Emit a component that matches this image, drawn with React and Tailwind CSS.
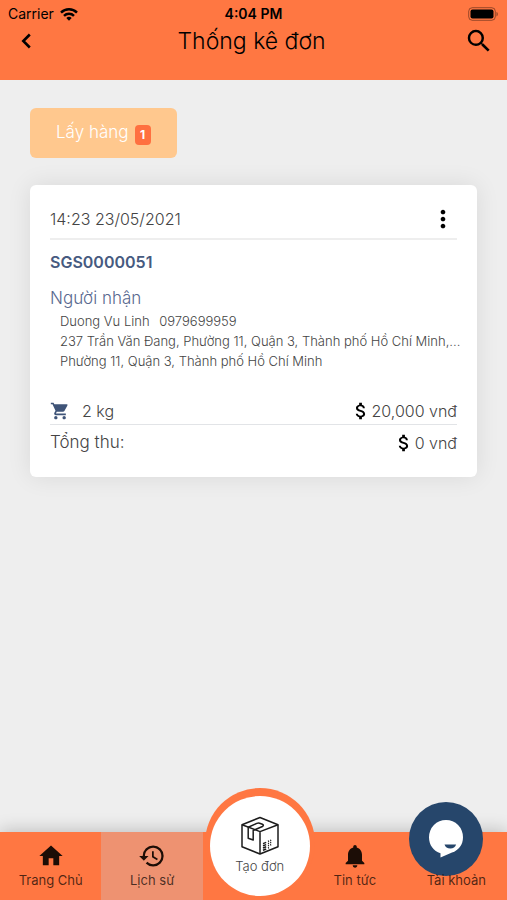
import React from "react";
import {
  MdSearch,
  MdMoreVert,
  MdShoppingCart,
  MdAttachMoney,
  MdHome,
  MdHistory,
  MdNotifications,
} from "react-icons/md";

const order = {
  time: "14:23 23/05/2021",
  code: "SGS0000051",
  name: "Duong Vu Linh",
  phone: "0979699959",
  address: "237 Trần Văn Đang, Phường 11, Quận 3, Thành phố Hồ Chí Minh,...",
  area: "Phường 11, Quận 3, Thành phố Hồ Chí Minh",
  weight: "2 kg",
  fee: "20,000 vnđ",
  total: "0 vnđ",
};

function WifiIcon() {
  return (
    <svg viewBox="0 0 18 13" className="w-[18px] h-[13px]" fill="none" stroke="currentColor" strokeWidth="2.5" aria-hidden="true">
      <path d="M1 4.6a11.4 11.4 0 0 1 16 0" />
      <path d="M4 7.8a7.2 7.2 0 0 1 10 0" />
      <path d="M9 12.8 6.3 10a3.9 3.9 0 0 1 5.4 0z" fill="currentColor" stroke="none" />
    </svg>
  );
}

function BatteryIcon() {
  return (
    <svg viewBox="0 0 31 14" className="w-[31px] h-[14px]" aria-hidden="true">
      <rect x="0.7" y="0.7" width="26.6" height="12.6" rx="3.6" fill="none" stroke="#000" strokeOpacity="0.4" />
      <rect x="2.5" y="2.5" width="23" height="9" rx="2" fill="#000" />
      <path d="M28.5 5v4.4c1.7-.6 1.7-3.8 0-4.4z" fill="#000" fillOpacity="0.45" />
    </svg>
  );
}

function BoxIcon() {
  return (
    <svg viewBox="0 0 40 40" className="w-10 h-10" fill="none" stroke="#1c1c1c" strokeWidth="1.5" strokeLinejoin="round" aria-hidden="true">
      <path d="M20 1.500 38 8.700v22L20 38 2 30.700v-22z" />
      <path d="M2 8.700 20 15.600 38 8.700M20 15.600V38" />
      <path d="M8.200 11.200v11l5 1.800V14.500l9.200-4c1.400-.8 1.200-1.800 0-2.300l-2.800-1c-1-.3-1.800-.2-2.800.2z" />
      <path d="M23 27.600l3.200-1.200M23 29.800l3.200-1.200M23 32l3.200-1.200M23 34.200l3.200-1.200" />
      <path d="M28 25.400l1-.4M30.200 24.600l1-.4M28 27.600l1-.4M30.200 26.800l1-.4M28 29.800l1-.4M30.200 29l1-.4M28 32l1-.4" />
    </svg>
  );
}

function ChatIcon() {
  return (
    <svg viewBox="0 0 36 40" className="w-9 h-10" aria-hidden="true">
      <path d="M18 1a17 17 0 0 1 17 17.200c0 8-4.600 13-11 15.400L12.500 38.500v-4.300C5.500 32 1 26 1 18.200A17 17 0 0 1 18 1z" fill="#fff" />
      <path d="M16.500 25.500h11.600c-.8 2.700-2.800 4-5.800 4s-5-1.300-5.800-4z" fill="#26466b" />
    </svg>
  );
}

function NavItem({ icon, label, active }) {
  return (
    <a
      href="#"
      className={`flex flex-col items-center pt-2.5 text-[13px] leading-5 text-black/70 ${
        active ? "bg-[#ee9271]" : ""
      }`}
    >
      <span className="flex h-7 items-center text-[#1c0d06]">{icon}</span>
      <span className="relative z-10">{label}</span>
    </a>
  );
}

export default function App() {
  return (
    <div className="flex min-h-screen flex-col bg-[#eeeeee] font-['Inter','Noto_Sans',sans-serif] text-[#444]">
      {/* Header */}
      <header className="h-20 bg-[#ff7742] text-black">
        <div className="grid grid-cols-3 items-center px-2 pt-1 text-[14px] leading-5">
          <div className="flex items-center gap-1.5">
            Carrier <WifiIcon />
          </div>
          <div className="text-center font-semibold">4:04 PM</div>
          <div className="flex justify-end">
            <BatteryIcon />
          </div>
        </div>
        <div className="flex h-[34px] items-center justify-between px-3">
          <button className="flex w-7 justify-center" aria-label="Back">
            <svg viewBox="0 0 10 16" className="h-4 w-2.5" fill="none" stroke="currentColor" strokeWidth="2.6" aria-hidden="true">
              <path d="M8.800 1.500 2.300 8l6.500 6.500" />
            </svg>
          </button>
          <h1 className="text-[23px] font-light leading-8">Thống kê đơn</h1>
          <button className="flex w-8 justify-center" aria-label="Search">
            <MdSearch size={30} />
          </button>
        </div>
      </header>

      <main className="flex-1 px-[30px] pt-7">
        {/* Status tab */}
        <button className="flex h-[50px] items-center gap-1.5 rounded-md bg-[#ffc88e] px-[26px] text-[17px] font-light text-white">
          Lấy hàng
          <span className="mt-1 w-4 rounded bg-[#ff7040] text-center text-[12px] font-bold leading-5">1</span>
        </button>

        {/* Order card */}
        <section className="mt-[27px] rounded-md bg-white px-5 pb-4 pt-5 shadow-[0_0_24px_rgba(0,0,0,0.09)]">
          <div className="flex h-[35px] items-start justify-between border-b-2 border-[#eeeeee]">
            <time className="text-base font-light leading-7">{order.time}</time>
            <button className="flex h-7 items-center text-black" aria-label="More">
              <MdMoreVert size={28} />
            </button>
          </div>
          <h2 className="mt-2.5 text-base font-semibold leading-6 text-[#465a80]">{order.code}</h2>
          <h3 className="mt-3 text-[17px] font-light leading-6 text-[#59698f]">Người nhận</h3>
          <div className="mt-px pl-2.5 text-[13px] font-light leading-5">
            <p>
              {order.name} <span className="ml-1.5">{order.phone}</span>
            </p>
            <p className="whitespace-nowrap">{order.address}</p>
            <p>{order.area}</p>
          </div>
          <div className="mt-[26px] flex h-7 items-center justify-between border-b border-[#e2e4e7] text-base font-light">
            <span className="flex items-center gap-3">
              <MdShoppingCart size={20} className="text-[#3f5478]" />
              {order.weight}
            </span>
            <span className="flex items-center">
              <MdAttachMoney size={22} className="text-black" />
              {order.fee}
            </span>
          </div>
          <div className="flex h-9 items-center justify-between text-base font-light">
            <span className="text-[17px]">Tổng thu:</span>
            <span className="flex items-center">
              <MdAttachMoney size={22} className="text-black" />
              {order.total}
            </span>
          </div>
        </section>
      </main>

      {/* Bottom navigation */}
      <nav className="sticky bottom-0 grid h-[68px] grid-cols-5 bg-[#ff7742] shadow-[0_-2px_16px_rgba(0,0,0,0.2)]">
        <NavItem icon={<MdHome size={28} />} label="Trang Chủ" />
        <NavItem icon={<MdHistory size={28} />} label="Lịch sử" active />
        <div className="relative">
          <a
            href="#"
            className="absolute -top-11 left-[57px] flex h-[110px] w-[110px] -translate-x-1/2 items-end justify-center rounded-full bg-[#ff7742] pb-0.5"
          >
            <span className="flex h-[100px] w-[100px] shrink-0 flex-col items-center rounded-full bg-white pt-5 text-[13px] font-light leading-5">
              <BoxIcon />
              Tạo đơn
            </span>
          </a>
        </div>
        <NavItem icon={<MdNotifications size={28} />} label="Tin tức" />
        <NavItem label="Tài khoản" />

        {/* Chat bubble, sits under the last label */}
        <button
          className="absolute bottom-6 right-6 flex h-[74px] w-[74px] items-center justify-center rounded-full bg-[#26466b]"
          aria-label="Chat"
        >
          <ChatIcon />
        </button>
      </nav>
    </div>
  );
}
